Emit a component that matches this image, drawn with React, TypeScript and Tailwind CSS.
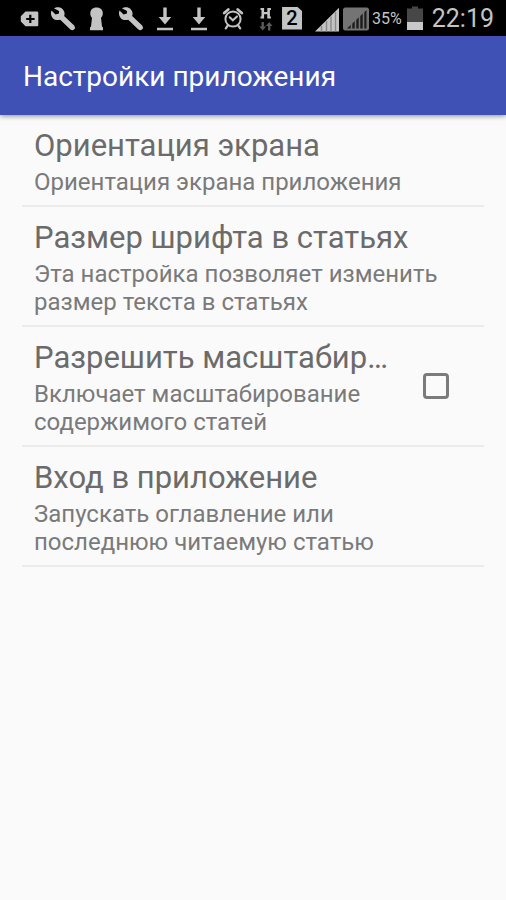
import React, { useState } from 'react';

const items = [
  { id: 'orientation', title: 'Ориентация экрана', summary: 'Ориентация экрана приложения' },
  { id: 'font', title: 'Размер шрифта в статьях', summary: 'Эта настройка позволяет изменить размер текста в статьях' },
  { id: 'zoom', title: 'Разрешить масштабир…', summary: 'Включает масштабирование содержимого статей', checkable: true },
  { id: 'start', title: 'Вход в приложение', summary: 'Запускать оглавление или последнюю читаемую статью' },
];

const StatusIcon: React.FC<{ children: React.ReactNode }> = ({ children }) => (
  <svg viewBox="-2 0 34 36" className="w-[34px] h-9 shrink-0" fill="#c4c4c4" aria-hidden="true">
    {children}
  </svg>
);

const Wrench = () => (
  <StatusIcon>
    <path d="M8 8.5 C10 7 14.2 6.6 16.7 9.2 C18.8 11.4 19 14 18.1 16 L28.2 25.4 Q29.8 27.6 28.2 29.2 Q26.4 31 24.4 29.4 L14.2 19.8 C11.3 20.6 8.4 19.9 6.6 17.9 C4.7 15.7 4.6 12.7 5.5 10.6 L9.6 14.5 L12.9 13.4 L13.1 11.2 L11.8 10.2 Z" />
  </StatusIcon>
);

const Download = () => (
  <StatusIcon>
    <path d="M15.3 7.5 h3.4 v9.5 h4.6 L17 24.5 L10.7 17 h4.6 Z M9 27.7 h16 v2.6 h-16 Z" />
  </StatusIcon>
);

const StatusBar = () => (
  <div className="flex h-9 items-center justify-end bg-black pr-3 text-[#c4c4c4]">
    <StatusIcon>
      <path fillRule="evenodd" d="M13.5 11.5 H25 Q26.3 11.5 26.3 12.8 V25 Q26.3 26.3 25 26.3 H13.5 L8.8 21.5 V16.2 Z M17.2 14.8 V17.9 H14.2 V20 H17.2 V23.1 H19.4 V20 H22.6 V17.9 H19.4 V14.8 Z" />
    </StatusIcon>
    <Wrench />
    <StatusIcon>
      <path d="M16.5 7.6 C20.5 7.6 22.8 10 22.8 13.3 C22.8 15.3 22 16.8 21 17.8 L22 26.5 L23 27.5 V30.2 H10 V27.5 L11 26.5 L12 17.8 C11 16.8 10.3 15.3 10.3 13.3 C10.3 10 12.6 7.6 16.5 7.6 Z" />
    </StatusIcon>
    <Wrench />
    <Download />
    <Download />
    <StatusIcon>
      <g fill="none" stroke="#c4c4c4" strokeLinecap="round">
        <circle cx="17" cy="19" r="7.6" strokeWidth="2" />
        <path d="M13.7 17.3 L16.8 20.3 L21 16.4" strokeWidth="2" />
        <path d="M8.2 13 L12.3 9.5 M25.8 13 L21.7 9.5" strokeWidth="2.8" />
        <path d="M11.8 25.5 L9.8 28.3 M22.2 25.5 L24.2 28.3" strokeWidth="2.2" />
      </g>
    </StatusIcon>
    <StatusIcon>
      <path d="M10.5 8 h3.6 v4 h3.2 V8 h3.6 v2 h-1 v6.5 h1 v2 h-3.6 v-4.2 h-3.2 v4.2 h-3.6 v-2 h1 V10 h-1 Z" />
      <path fill="#5a5a5a" d="M11.5 22 h2.4 v4.5 h2.2 L12.7 30.5 L9.3 26.5 h2.2 Z M18 30.5 h2.4 v-4.5 h2.2 L19.2 22 L15.8 26 H18 Z" />
    </StatusIcon>
    <div className="mr-3 flex h-[23px] w-5 items-center justify-center bg-[#c4c4c4] text-[20px] font-medium text-black [clip-path:polygon(0_0,75%_0,100%_20%,100%_100%,0_100%)]">2</div>
    <svg viewBox="0 0 58 36" className="mr-1 h-9 w-[58px] shrink-0" aria-hidden="true">
      <path fill="#c4c4c4" d="M1 31.5 L25 7.8 V31.5 Z" />
      <path stroke="#8a8a8a" strokeWidth="1.4" d="M7.5 26 V31.5 M12.5 21 V31.5 M17 16.5 V31.5 M21.5 12 V31.5" />
      <rect x="29" y="7.5" width="26" height="23" rx="2.5" fill="#747474" />
      <path fill="#1c1c1c" d="M33 28.5 L52.5 10 V28.5 Z" />
      <path stroke="#747474" strokeWidth="1.6" d="M37.5 22 V29 M41.5 19 V29 M45.5 15 V29 M49.5 11 V29" />
    </svg>
    <span className="-ml-1 pt-0.5 text-[16px]">35%</span>
    <svg viewBox="0 0 18 36" className="ml-1 mr-2 h-9 w-[18px] shrink-0" aria-hidden="true">
      <path fill="#474747" d="M6 6.5 h6 v2 h5 V22.5 H1 V8.5 h5 Z" />
      <path fill="#c9c9c9" d="M1 22 h16 v8 H1 Z" />
    </svg>
    <span className="pt-0.5 text-[25px] leading-8">22:19</span>
  </div>
);

export default function App() {
  const [zoomAllowed, setZoomAllowed] = useState(false);

  return (
    <div className="min-h-screen bg-[#fafafa] font-[Roboto,sans-serif]">
      <StatusBar />
      <header className="flex h-[79px] items-center bg-[#3f51b5] px-[23px] pt-0.5 shadow-[0_1px_5px_rgba(0,0,0,0.45)]">
        <h1 className="text-[28px] leading-9 text-white">Настройки приложения</h1>
      </header>

      <ul className="px-[22px]">
        {items.map(item => {
          const text = (
            <>
              <span id={`${item.id}-title`} className="mb-1 block whitespace-nowrap text-[31px] leading-9 text-[#6b6b6b]">{item.title}</span>
              <span className="block text-[24px] leading-7 text-[#7a7a7a]">{item.summary}</span>
            </>
          );
          return (
            <li key={item.id} className="border-b-2 border-[#ebebeb]">
              {item.checkable ? (
                <label className="flex items-center pl-3">
                  <span className="min-w-0 flex-1 pt-[13px] pb-[9px] pr-8">{text}</span>
                  <input
                    type="checkbox"
                    aria-labelledby={`${item.id}-title`}
                    checked={zoomAllowed}
                    onChange={e => setZoomAllowed(e.target.checked)}
                    className="mr-[35px] size-[26px] shrink-0 appearance-none rounded-sm border-3 border-[#7b7b7b] checked:bg-[#3f51b5]"
                  />
                </label>
              ) : (
                <button type="button" className="block w-full px-3 pt-[13px] pb-[9px] text-left">{text}</button>
              )}
            </li>
          );
        })}
      </ul>
    </div>
  );
}
